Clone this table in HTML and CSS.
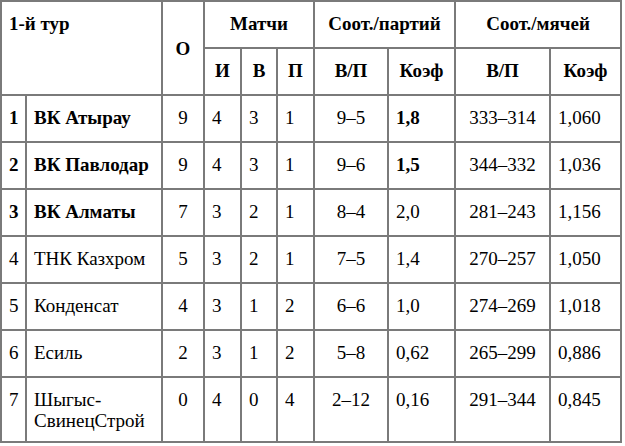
FILE: index.html
```html
<!DOCTYPE html>
<html>
<head>
<meta charset="utf-8">
<link rel="stylesheet" href="styles.css">
</head>
<body>
<table class="standings">
  <colgroup>
    <col class="c-pos"><col class="c-name"><col class="c-pts">
    <col class="c-m"><col class="c-m2"><col class="c-m">
    <col class="c-sp"><col class="c-sk"><col class="c-bp"><col class="c-bk">
  </colgroup>
  <thead>
    <tr>
      <th colspan="2" rowspan="2" class="h-round">1-й тур</th>
      <th rowspan="2" class="h-mid">О</th>
      <th colspan="3">Матчи</th>
      <th colspan="2">Соот./партий</th>
      <th colspan="2">Соот./мячей</th>
    </tr>
    <tr>
      <th>И</th><th>В</th><th>П</th>
      <th>В/П</th><th>Коэф</th>
      <th>В/П</th><th>Коэф</th>
    </tr>
  </thead>
  <tbody>
    <tr>
      <td class="b">1</td><td class="b">ВК Атырау</td><td class="c">9</td>
      <td>4</td><td>3</td><td>1</td>
      <td class="c">9–5</td><td class="b">1,8</td>
      <td class="c">333–314</td><td>1,060</td>
    </tr>
    <tr>
      <td class="b">2</td><td class="b">ВК Павлодар</td><td class="c">9</td>
      <td>4</td><td>3</td><td>1</td>
      <td class="c">9–6</td><td class="b">1,5</td>
      <td class="c">344–332</td><td>1,036</td>
    </tr>
    <tr>
      <td class="b">3</td><td class="b">ВК Алматы</td><td class="c">7</td>
      <td>3</td><td>2</td><td>1</td>
      <td class="c">8–4</td><td>2,0</td>
      <td class="c">281–243</td><td>1,156</td>
    </tr>
    <tr>
      <td>4</td><td>ТНК Казхром</td><td class="c">5</td>
      <td>3</td><td>2</td><td>1</td>
      <td class="c">7–5</td><td>1,4</td>
      <td class="c">270–257</td><td>1,050</td>
    </tr>
    <tr>
      <td>5</td><td>Конденсат</td><td class="c">4</td>
      <td>3</td><td>1</td><td>2</td>
      <td class="c">6–6</td><td>1,0</td>
      <td class="c">274–269</td><td>1,018</td>
    </tr>
    <tr>
      <td>6</td><td>Есиль</td><td class="c">2</td>
      <td>3</td><td>1</td><td>2</td>
      <td class="c">5–8</td><td>0,62</td>
      <td class="c">265–299</td><td>0,886</td>
    </tr>
    <tr>
      <td>7</td><td>Шыгыс-<br>СвинецСтрой</td><td class="c">0</td>
      <td>4</td><td>0</td><td>4</td>
      <td class="c">2–12</td><td>0,16</td>
      <td class="c">291–344</td><td>0,845</td>
    </tr>
  </tbody>
</table>
</body>
</html>
```
FILE: styles.css
```css
html, body {
  margin: 0;
  padding: 0;
  background: #ffffff;
}
body {
  font-family: "Liberation Serif", "Times New Roman", serif;
  font-size: 19px;
  color: #000000;
}
.standings {
  table-layout: fixed;
  width: 622px;
  border-collapse: separate;
  border-spacing: 0;
  border: 1px solid #7a7a7a;
}
.c-pos { width: 25px; }
.c-name { width: 136px; }
.c-pts { width: 42px; }
.c-m { width: 37px; }
.c-m2 { width: 36px; }
.c-sp { width: 74px; }
.c-sk { width: 67px; }
.c-bp { width: 95px; }
.c-bk { width: 71px; }
.standings tr {
  height: 47px;
}
.standings th,
.standings td {
  border: 1px solid #7a7a7a;
  padding: 11px 7px 10px;
  line-height: 21px;
  vertical-align: top;
}
.standings th {
  font-weight: bold;
  text-align: center;
}
.standings th.h-round {
  text-align: left;
  vertical-align: top;
}
.standings th.h-mid {
  vertical-align: middle;
}
.standings td {
  text-align: left;
}
.standings td.c {
  text-align: center;
}
.standings td.b {
  font-weight: bold;
}
```
